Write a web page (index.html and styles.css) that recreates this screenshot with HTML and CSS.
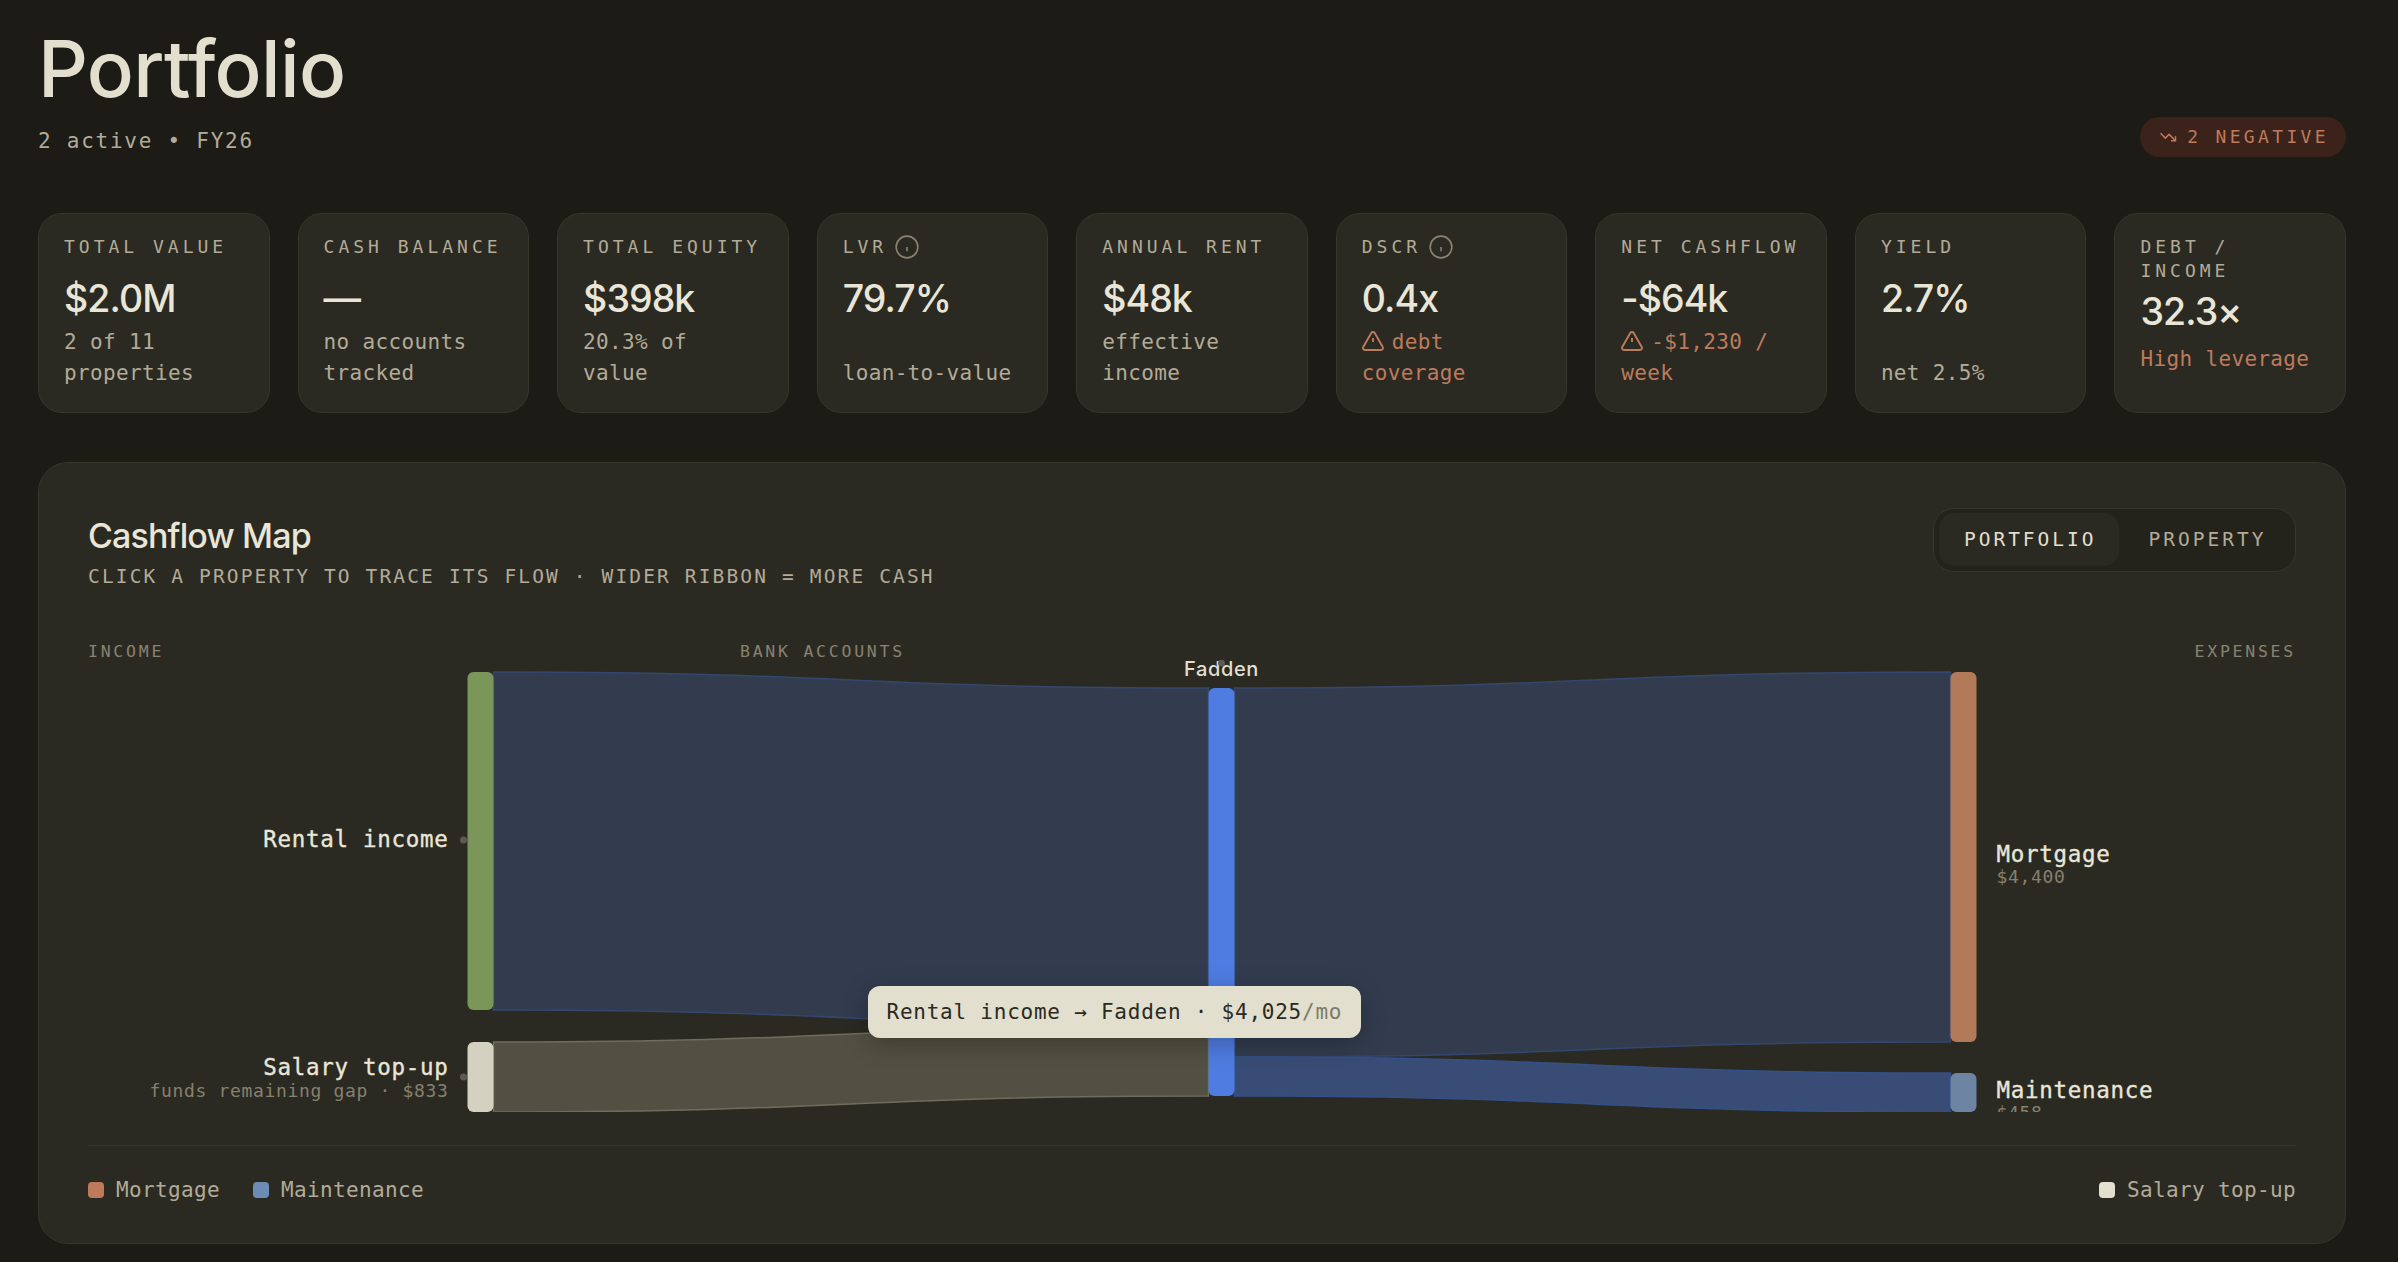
FILE: index.html
```html
<!DOCTYPE html>
<html lang="en">
<head>
<meta charset="utf-8">
<title>Portfolio</title>
<link rel="stylesheet" href="styles.css">
</head>
<body>
<main class="page">
  <header class="head">
    <div>
      <h1 class="title">Portfolio</h1>
      <p class="subtitle">2 active • FY26</p>
    </div>
    <div class="badge">
      <svg class="badge-icon" viewBox="0 0 24 24"><path d="M22 17l-8.5-8.5-5 5L2 7"/><path d="M16 17h6v-6"/></svg>
      <span>2 NEGATIVE</span>
    </div>
  </header>

  <section class="cards">
    <article class="card">
      <div class="label">TOTAL VALUE</div>
      <div class="value">$2.0M</div>
      <div class="sub">2 of 11 properties</div>
    </article>
    <article class="card">
      <div class="label">CASH BALANCE</div>
      <div class="value">—</div>
      <div class="sub">no accounts tracked</div>
    </article>
    <article class="card">
      <div class="label">TOTAL EQUITY</div>
      <div class="value">$398k</div>
      <div class="sub">20.3% of value</div>
    </article>
    <article class="card">
      <div class="label label-info">LVR <svg class="info" viewBox="0 0 24 24"><circle cx="12" cy="12" r="10"/><path d="M12 16v-4"/><path d="M12 8h.01"/></svg></div>
      <div class="value">79.7%</div>
      <div class="sub sub-push">loan-to-value</div>
    </article>
    <article class="card">
      <div class="label">ANNUAL RENT</div>
      <div class="value">$48k</div>
      <div class="sub">effective income</div>
    </article>
    <article class="card">
      <div class="label label-info">DSCR <svg class="info" viewBox="0 0 24 24"><circle cx="12" cy="12" r="10"/><path d="M12 16v-4"/><path d="M12 8h.01"/></svg></div>
      <div class="value">0.4x</div>
      <div class="sub warn"><svg class="warn-icon" viewBox="0 0 24 24"><path d="M21.73 18l-8-14a2 2 0 0 0-3.48 0l-8 14A2 2 0 0 0 4 21h16a2 2 0 0 0 1.73-3"/><path d="M12 9v4"/><path d="M12 17h.01"/></svg>debt coverage</div>
    </article>
    <article class="card">
      <div class="label">NET CASHFLOW</div>
      <div class="value">-$64k</div>
      <div class="sub warn"><svg class="warn-icon" viewBox="0 0 24 24"><path d="M21.73 18l-8-14a2 2 0 0 0-3.48 0l-8 14A2 2 0 0 0 4 21h16a2 2 0 0 0 1.73-3"/><path d="M12 9v4"/><path d="M12 17h.01"/></svg>-$1,230 / week</div>
    </article>
    <article class="card">
      <div class="label">YIELD</div>
      <div class="value">2.7%</div>
      <div class="sub sub-push">net 2.5%</div>
    </article>
    <article class="card card-wrap">
      <div class="label">DEBT / INCOME</div>
      <div class="value">32.3×</div>
      <div class="sub warn">High leverage</div>
    </article>
  </section>

  <section class="panel">
    <div class="panel-head">
      <div class="panel-text">
        <h2 class="panel-title">Cashflow Map</h2>
        <p class="panel-sub">CLICK A PROPERTY TO TRACE ITS FLOW · WIDER RIBBON = MORE CASH</p>
      </div>
      <div class="toggle">
        <span class="toggle-btn toggle-on">PORTFOLIO</span>
        <span class="toggle-btn">PROPERTY</span>
      </div>
    </div>

    <div class="cols">
      <span>INCOME</span>
      <span>BANK ACCOUNTS</span>
      <span class="col-end">EXPENSES</span>
    </div>

    <div class="chart">
      <svg class="sankey" viewBox="0 0 2207 452" width="2207" height="452">
        <g transform="translate(-88.5 -660)">
          <path class="rib rib-main" d="M494 672C851 672 851 688 1209 688L1209 1026C851 1026 851 1010 494 1010Z"/>
          <path class="rib rib-salary" d="M494 1042C851 1042 851 1026 1209 1026L1209 1096C851 1096 851 1112 494 1112Z"/>
          <path class="rib rib-main" d="M1235 688C1593 688 1593 672 1951 672L1951 1042C1593 1042 1593 1057 1235 1057Z"/>
          <path class="rib rib-maint" d="M1235 1057C1593 1057 1593 1073 1951 1073L1951 1112C1593 1112 1593 1096 1235 1096Z"/>
          <rect class="n-green" x="468" y="672" width="26" height="338" rx="6"/>
          <rect class="n-cream" x="468" y="1042" width="26" height="70" rx="6"/>
          <rect class="n-blue" x="1209" y="688" width="26" height="408" rx="6"/>
          <rect class="n-copper" x="1951" y="672" width="26" height="370" rx="6"/>
          <rect class="n-steel" x="1951" y="1073" width="26" height="39" rx="6"/>
          <circle class="dot" cx="464" cy="840" r="3.5"/>
          <circle class="dot" cx="464" cy="1077" r="3.5"/>
          <text class="t-name" x="449" y="847" text-anchor="end">Rental income</text>
          <text class="t-name" x="449" y="1075" text-anchor="end">Salary top-up</text>
          <text class="t-small" x="449" y="1097" text-anchor="end">funds remaining gap · $833</text>
          <text class="t-node" x="1222" y="676" text-anchor="middle">Fadden</text>
          <circle class="dot" cx="1222" cy="663" r="3.5"/>
          <text class="t-name" x="1997" y="862">Mortgage</text>
          <text class="t-small" x="1997" y="883">$4,400</text>
          <text class="t-name" x="1997" y="1098">Maintenance</text>
          <text class="t-small" x="1997" y="1119">$458</text>
        </g>
      </svg>
      <div class="tip">Rental income → Fadden · $4,025<span class="tip-dim">/mo</span></div>
    </div>

    <div class="legend">
      <div class="legend-group">
        <span class="legend-item"><i class="sw sw-copper"></i>Mortgage</span>
        <span class="legend-item"><i class="sw sw-steel"></i>Maintenance</span>
      </div>
      <span class="legend-item"><i class="sw sw-cream"></i>Salary top-up</span>
    </div>
  </section>
</main>
</body>
</html>
```
FILE: styles.css
```css
* { box-sizing: border-box; }
html, body { margin: 0; height: 100%; }
body {
  background: #1c1b16;
  color: #e2dfce;
  font-family: "Inter", "Liberation Sans", sans-serif;
  overflow: hidden;
}
.page { padding: 0 52px 0 38px; }
.head {
  display: flex;
  justify-content: space-between;
  align-items: flex-end;
  height: 213px;
  padding-bottom: 56px;
}
.title {
  margin: 0;
  font-size: 78px;
  line-height: 88px;
  font-weight: 450;
  letter-spacing: -0.7px;
  color: #e2dfce;
}
.subtitle {
  margin: 13px 0 0;
  font: 400 21px/31px "DejaVu Sans Mono", monospace;
  letter-spacing: 1.75px;
  color: #b3ab97;
}
.badge {
  display: flex;
  align-items: center;
  gap: 10.5px;
  height: 40px;
  padding: 0 17px 0 18.5px;
  border-radius: 20px;
  background: #3b221b;
  color: #bf7a5c;
  font: 400 18px/1 "DejaVu Sans Mono", monospace;
  letter-spacing: 3.35px;
}
.badge-icon { width: 18px; height: 18px; fill: none; stroke: currentColor; stroke-width: 2; }
.cards {
  display: grid;
  grid-template-columns: repeat(9, 1fr);
  gap: 28px;
}
.card {
  height: 200px;
  padding: 20.5px 25px;
  border: 1.5px solid #37362a;
  border-radius: 24px;
  background: #2a2a22;
  display: flex;
  flex-direction: column;
}
.label {
  font: 400 18px/24px "DejaVu Sans Mono", monospace;
  letter-spacing: 4px;
  color: #b3ab97;
}
.label-info { display: flex; align-items: center; gap: 6.5px; height: 24px; }
.info { width: 26px; height: 26px; flex: none; fill: none; stroke: #8a8270; stroke-width: 1.5; }
.value {
  font-size: 37.5px;
  line-height: 54px;
  font-weight: 450;
  margin-top: 13px;
  color: #e9e6d8;
  letter-spacing: -0.025em;
}
.sub {
  font: 400 21px/31.5px "DejaVu Sans Mono", monospace;
  letter-spacing: 0.35px;
  color: #b3ab97;
  margin-top: 1px;
}
.sub-push { margin-top: 32.5px; }
.warn { color: #bf7a5c; }
.warn-icon {
  width: 24px;
  height: 24px;
  fill: none;
  stroke: currentColor;
  stroke-width: 1.9;
  vertical-align: 0;
  margin: -8px 7px -4px -1px;
}
.card-wrap .value { margin-top: 2px; }
.card-wrap .sub { margin-top: 5px; }
.panel {
  margin-top: 49px;
  height: 782px;
  padding: 48px 49px 0;
  border: 1.5px solid #37362a;
  border-radius: 30px;
  background: #2a2a22;
}
.panel-head { display: flex; justify-content: space-between; align-items: flex-start; }
.panel-text { padding-top: 3px; }
.panel-title { margin: 0; font-size: 34px; line-height: 44px; font-weight: 450; letter-spacing: -0.025em; color: #e9e6d8; }
.panel-sub {
  margin: 5px 0 0;
  font: 400 19.5px/28px "DejaVu Sans Mono", monospace;
  letter-spacing: 2.14px;
  color: #b3ab97;
}
.toggle {
  display: flex;
  height: 64px;
  margin-top: -3.5px;
  padding: 4.5px;
  border: 1.5px solid #37362a;
  border-radius: 21px;
  background: #23231b;
}
.toggle-btn {
  display: flex;
  align-items: center;
  padding: 0 24px 0 30px;
  border-radius: 15px;
  font: 400 19.5px/1 "DejaVu Sans Mono", monospace;
  letter-spacing: 3px;
  color: #b3ab97;
}
.toggle-on { padding: 0 22px 0 25px; background: #2a2a22; color: #e2dfce; }
.cols {
  display: grid;
  grid-template-columns: 652px auto 1fr;
  margin-top: 48.5px;
  font: 400 16.5px/24px "DejaVu Sans Mono", monospace;
  letter-spacing: 2.75px;
  color: #8a8270;
}
.col-end { justify-self: end; }
.chart { position: relative; height: 452px; margin-top: -3.5px; }
.sankey { display: block; overflow: hidden; }
.rib { stroke-width: 1.5; }
.rib-main { fill: #323c4e; stroke: #34476f; }
.rib-salary { fill: #525042; stroke: #6f6d5d; }
.rib-maint { fill: #384c75; stroke: #34508a; }
.n-green { fill: #7a9658; }
.n-cream { fill: #d4d1c0; }
.n-blue { fill: #4e7ce0; }
.n-copper { fill: #b37a5a; }
.n-steel { fill: #6d85a3; }
.dot { fill: #5e5a52; }
.t-name {
  font: 400 22.5px "DejaVu Sans Mono", monospace;
  letter-spacing: 0.7px;
  fill: #e9e6d8;
  stroke: #e9e6d8;
  stroke-width: 0.35px;
}
.t-small { font: 400 18px "DejaVu Sans Mono", monospace; letter-spacing: 0.66px; fill: #87806e; }
.t-node { font: 500 20px "Inter", sans-serif; letter-spacing: 0.6px; fill: #e2dfce; }
.tip {
  position: absolute;
  left: 779.5px;
  top: 326px;
  height: 52px;
  width: 493px;
  padding-left: 19px;
  display: flex;
  align-items: center;
  white-space: pre;
  border-radius: 12px;
  background: #e2dfce;
  color: #2a2a22;
  font: 400 21px/1 "DejaVu Sans Mono", monospace;
  letter-spacing: 0.76px;
  box-shadow: 0 6px 24px rgba(0, 0, 0, 0.25);
}
.tip-dim { color: #7d7a6a; }
.legend {
  display: flex;
  justify-content: space-between;
  align-items: center;
  margin-top: 33px;
  padding-top: 27.5px;
  border-top: 1.5px solid #37362a;
  font: 400 21px/32px "DejaVu Sans Mono", monospace;
  letter-spacing: 0.35px;
  color: #b3ab97;
}
.legend-group { display: flex; gap: 33px; }
.legend-item { display: flex; align-items: center; gap: 12px; }
.sw { display: block; width: 16px; height: 16px; border-radius: 4px; }
.sw-copper { background: #bf7a5c; }
.sw-steel { background: #6d8cb3; }
.sw-cream { background: #e2dfce; }
```
